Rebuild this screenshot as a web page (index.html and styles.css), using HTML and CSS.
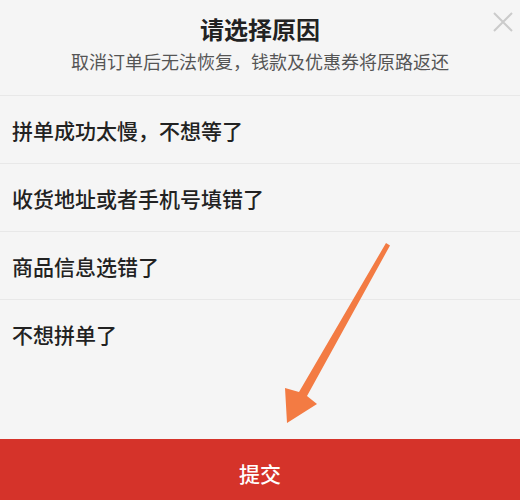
FILE: index.html
```html
<!DOCTYPE html>
<html lang="zh-CN">
<head>
<meta charset="utf-8">
<title>请选择原因</title>
<link rel="stylesheet" href="styles.css">
</head>
<body>
<div class="sheet">
  <header class="header">
    <h1 class="title">请选择原因</h1>
    <p class="subtitle">取消订单后无法恢复，钱款及优惠券将原路返还</p>
    <svg class="close" width="20" height="20" viewBox="0 0 20 20">
      <path d="M1 1 L19 19 M19 1 L1 19" stroke="#cbcbcb" stroke-width="2" fill="none"/>
    </svg>
  </header>
  <ul class="reasons">
    <li class="reason">拼单成功太慢，不想等了</li>
    <li class="reason">收货地址或者手机号填错了</li>
    <li class="reason">商品信息选错了</li>
    <li class="reason">不想拼单了</li>
  </ul>
  <div class="spacer"></div>
  <button class="submit">提交</button>
  <svg class="arrow" width="520" height="500" viewBox="0 0 520 500">
    <polygon points="386,243 390,245.5 307,396 317,404 287,423 285,388 299,392" fill="#f37b43"/>
  </svg>
</div>
</body>
</html>
```

FILE: styles.css
```css
html, body {
  margin: 0;
  padding: 0;
}
body {
  background: #f5f5f5;
  font-family: "Noto Sans CJK SC", "Noto Sans", sans-serif;
}
.sheet {
  position: relative;
  width: 520px;
  height: 500px;
  display: flex;
  flex-direction: column;
  background: #f5f5f5;
  overflow: hidden;
}
.header {
  position: relative;
  height: 96px;
  box-sizing: border-box;
  padding-top: 13px;
  border-bottom: 1px solid #e8e8e8;
  text-align: center;
}
.title {
  margin: 0;
  font-size: 24px;
  line-height: 32px;
  font-weight: 700;
  color: #222;
}
.subtitle {
  margin: 4px 0 0;
  font-size: 18px;
  line-height: 24px;
  color: #555;
}
.close {
  position: absolute;
  top: 12px;
  right: 7px;
}
.reasons {
  list-style: none;
  margin: 0;
  padding: 0;
}
.reason {
  height: 67px;
  display: flex;
  align-items: center;
  padding-left: 12px;
  font-size: 21px;
  font-weight: 500;
  color: #222;
  border-bottom: 1px solid #e8e8e8;
}
.reason:last-child {
  border-bottom: none;
}
.spacer {
  flex: 1;
}
.submit {
  height: 61px;
  box-sizing: border-box;
  padding: 8px 0 0;
  border: none;
  background: #d5332a;
  color: #fff;
  font-family: "Noto Sans CJK SC", "Noto Sans", sans-serif;
  font-size: 21px;
  font-weight: 500;
  line-height: 53px;
  width: 100%;
}
.arrow {
  position: absolute;
  left: 0;
  top: 0;
  pointer-events: none;
}
```
